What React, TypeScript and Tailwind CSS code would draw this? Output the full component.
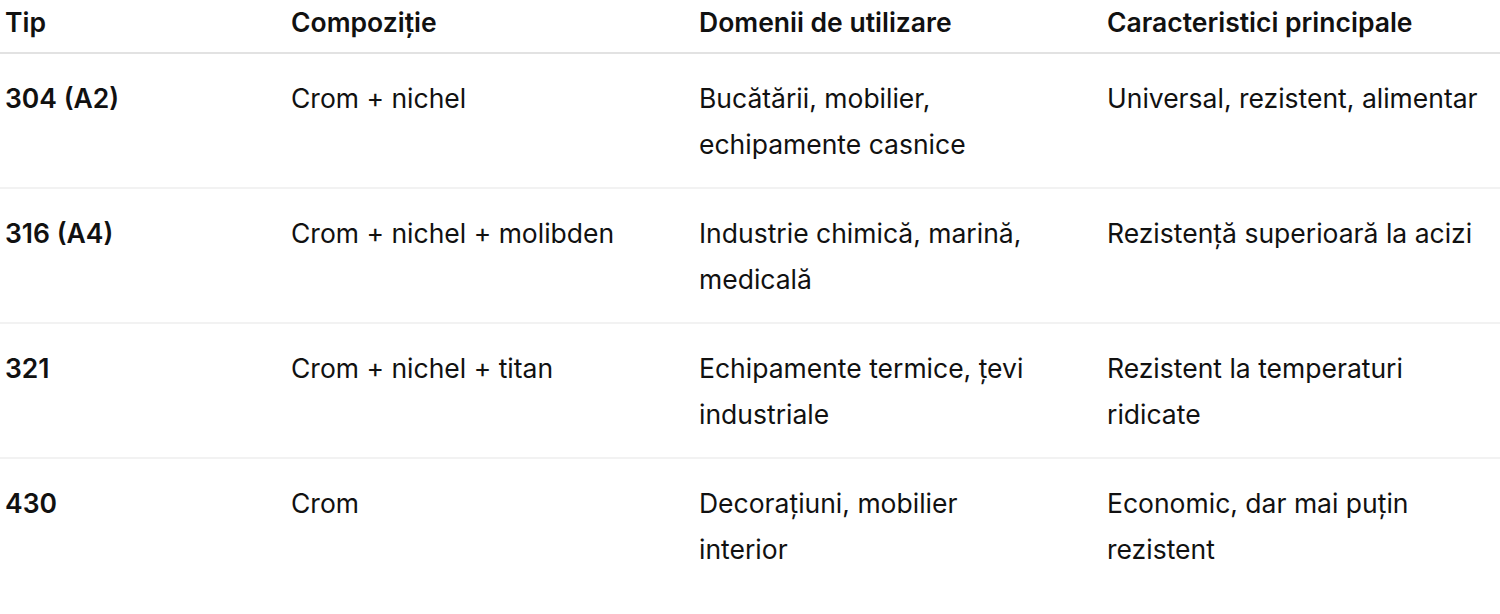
const rows = [
  ["304 (A2)", "Crom + nichel", "Bucătării, mobilier, echipamente casnice", "Universal, rezistent, alimentar"],
  ["316 (A4)", "Crom + nichel + molibden", "Industrie chimică, marină, medicală", "Rezistență superioară la acizi"],
  ["321", "Crom + nichel + titan", "Echipamente termice, țevi industriale", "Rezistent la temperaturi ridicate"],
  ["430", "Crom", "Decorațiuni, mobilier interior", "Economic, dar mai puțin rezistent"],
];

const headers = ["Tip", "Compoziție", "Domenii de utilizare", "Caracteristici principale"];

export default function App() {
  return (
    <div className="h-[614px] w-[1500px] overflow-hidden bg-white font-['Inter',sans-serif] text-[26.5px] leading-[46px] text-[#111]">
      <div className="grid h-[54px] grid-cols-[286px_408px_408px_1fr] border-b-2 border-[#e2e2e2] pl-[5px] font-semibold">
        {headers.map((h) => (
          <div key={h} className="leading-[44px]">
            {h}
          </div>
        ))}
      </div>
      {rows.map((r, i) => (
        <div
          key={r[0]}
          className={
            "grid grid-cols-[286px_408px_408px_1fr] pt-[21px] pb-[20px] pl-[5px] " +
            (i < rows.length - 1 ? "border-b-2 border-[#f2f2f2]" : "")
          }
        >
          <div className="font-semibold">{r[0]}</div>
          <div className="pr-6">{r[1]}</div>
          <div className="pr-[64px]">{r[2]}</div>
          <div className="w-[390px]">{r[3]}</div>
        </div>
      ))}
    </div>
  );
}
